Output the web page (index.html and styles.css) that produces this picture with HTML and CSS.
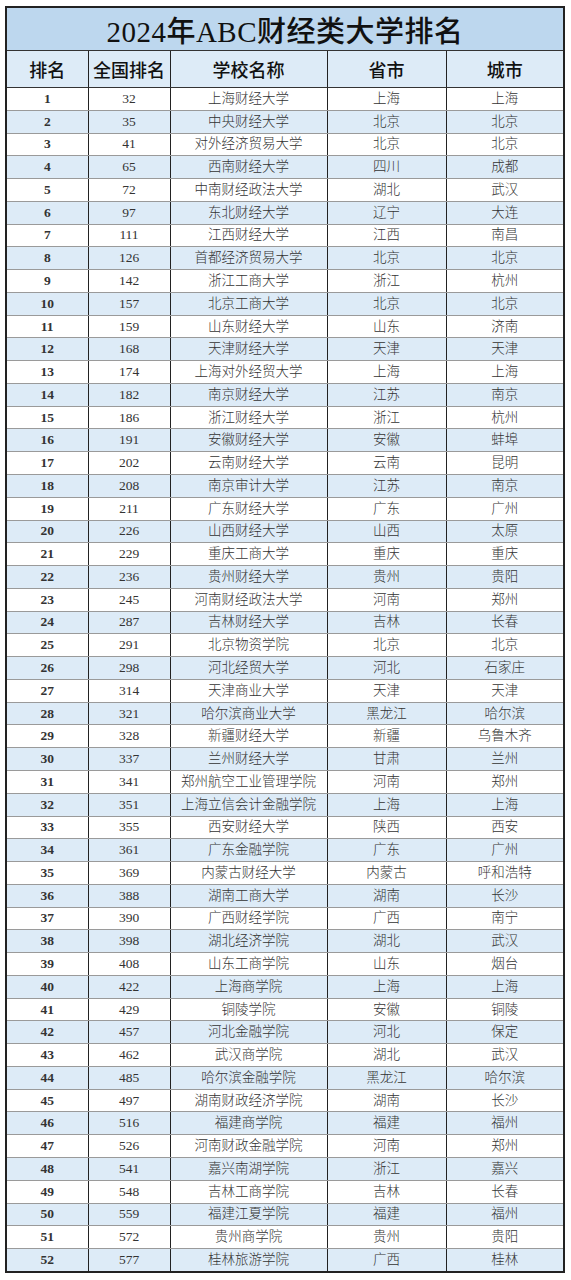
FILE: index.html
```html
<!DOCTYPE html>
<html lang="zh-CN">
<head>
<meta charset="utf-8">
<title>2024年ABC财经类大学排名</title>
<link rel="stylesheet" href="styles.css">
</head>
<body>
<table class="rank">
<colgroup>
<col class="c1"><col class="c2"><col class="c3"><col class="c4"><col class="c5">
</colgroup>
<thead>
<tr class="title"><th colspan="5">2024年ABC财经类大学排名</th></tr>
<tr class="head"><th>排名</th><th>全国排名</th><th>学校名称</th><th>省市</th><th>城市</th></tr>
</thead>
<tbody>
<tr><td>1</td><td>32</td><td>上海财经大学</td><td>上海</td><td>上海</td></tr>
<tr><td>2</td><td>35</td><td>中央财经大学</td><td>北京</td><td>北京</td></tr>
<tr><td>3</td><td>41</td><td>对外经济贸易大学</td><td>北京</td><td>北京</td></tr>
<tr><td>4</td><td>65</td><td>西南财经大学</td><td>四川</td><td>成都</td></tr>
<tr><td>5</td><td>72</td><td>中南财经政法大学</td><td>湖北</td><td>武汉</td></tr>
<tr><td>6</td><td>97</td><td>东北财经大学</td><td>辽宁</td><td>大连</td></tr>
<tr><td>7</td><td>111</td><td>江西财经大学</td><td>江西</td><td>南昌</td></tr>
<tr><td>8</td><td>126</td><td>首都经济贸易大学</td><td>北京</td><td>北京</td></tr>
<tr><td>9</td><td>142</td><td>浙江工商大学</td><td>浙江</td><td>杭州</td></tr>
<tr><td>10</td><td>157</td><td>北京工商大学</td><td>北京</td><td>北京</td></tr>
<tr><td>11</td><td>159</td><td>山东财经大学</td><td>山东</td><td>济南</td></tr>
<tr><td>12</td><td>168</td><td>天津财经大学</td><td>天津</td><td>天津</td></tr>
<tr><td>13</td><td>174</td><td>上海对外经贸大学</td><td>上海</td><td>上海</td></tr>
<tr><td>14</td><td>182</td><td>南京财经大学</td><td>江苏</td><td>南京</td></tr>
<tr><td>15</td><td>186</td><td>浙江财经大学</td><td>浙江</td><td>杭州</td></tr>
<tr><td>16</td><td>191</td><td>安徽财经大学</td><td>安徽</td><td>蚌埠</td></tr>
<tr><td>17</td><td>202</td><td>云南财经大学</td><td>云南</td><td>昆明</td></tr>
<tr><td>18</td><td>208</td><td>南京审计大学</td><td>江苏</td><td>南京</td></tr>
<tr><td>19</td><td>211</td><td>广东财经大学</td><td>广东</td><td>广州</td></tr>
<tr><td>20</td><td>226</td><td>山西财经大学</td><td>山西</td><td>太原</td></tr>
<tr><td>21</td><td>229</td><td>重庆工商大学</td><td>重庆</td><td>重庆</td></tr>
<tr><td>22</td><td>236</td><td>贵州财经大学</td><td>贵州</td><td>贵阳</td></tr>
<tr><td>23</td><td>245</td><td>河南财经政法大学</td><td>河南</td><td>郑州</td></tr>
<tr><td>24</td><td>287</td><td>吉林财经大学</td><td>吉林</td><td>长春</td></tr>
<tr><td>25</td><td>291</td><td>北京物资学院</td><td>北京</td><td>北京</td></tr>
<tr><td>26</td><td>298</td><td>河北经贸大学</td><td>河北</td><td>石家庄</td></tr>
<tr><td>27</td><td>314</td><td>天津商业大学</td><td>天津</td><td>天津</td></tr>
<tr><td>28</td><td>321</td><td>哈尔滨商业大学</td><td>黑龙江</td><td>哈尔滨</td></tr>
<tr><td>29</td><td>328</td><td>新疆财经大学</td><td>新疆</td><td>乌鲁木齐</td></tr>
<tr><td>30</td><td>337</td><td>兰州财经大学</td><td>甘肃</td><td>兰州</td></tr>
<tr><td>31</td><td>341</td><td>郑州航空工业管理学院</td><td>河南</td><td>郑州</td></tr>
<tr><td>32</td><td>351</td><td>上海立信会计金融学院</td><td>上海</td><td>上海</td></tr>
<tr><td>33</td><td>355</td><td>西安财经大学</td><td>陕西</td><td>西安</td></tr>
<tr><td>34</td><td>361</td><td>广东金融学院</td><td>广东</td><td>广州</td></tr>
<tr><td>35</td><td>369</td><td>内蒙古财经大学</td><td>内蒙古</td><td>呼和浩特</td></tr>
<tr><td>36</td><td>388</td><td>湖南工商大学</td><td>湖南</td><td>长沙</td></tr>
<tr><td>37</td><td>390</td><td>广西财经学院</td><td>广西</td><td>南宁</td></tr>
<tr><td>38</td><td>398</td><td>湖北经济学院</td><td>湖北</td><td>武汉</td></tr>
<tr><td>39</td><td>408</td><td>山东工商学院</td><td>山东</td><td>烟台</td></tr>
<tr><td>40</td><td>422</td><td>上海商学院</td><td>上海</td><td>上海</td></tr>
<tr><td>41</td><td>429</td><td>铜陵学院</td><td>安徽</td><td>铜陵</td></tr>
<tr><td>42</td><td>457</td><td>河北金融学院</td><td>河北</td><td>保定</td></tr>
<tr><td>43</td><td>462</td><td>武汉商学院</td><td>湖北</td><td>武汉</td></tr>
<tr><td>44</td><td>485</td><td>哈尔滨金融学院</td><td>黑龙江</td><td>哈尔滨</td></tr>
<tr><td>45</td><td>497</td><td>湖南财政经济学院</td><td>湖南</td><td>长沙</td></tr>
<tr><td>46</td><td>516</td><td>福建商学院</td><td>福建</td><td>福州</td></tr>
<tr><td>47</td><td>526</td><td>河南财政金融学院</td><td>河南</td><td>郑州</td></tr>
<tr><td>48</td><td>541</td><td>嘉兴南湖学院</td><td>浙江</td><td>嘉兴</td></tr>
<tr><td>49</td><td>548</td><td>吉林工商学院</td><td>吉林</td><td>长春</td></tr>
<tr><td>50</td><td>559</td><td>福建江夏学院</td><td>福建</td><td>福州</td></tr>
<tr><td>51</td><td>572</td><td>贵州商学院</td><td>贵州</td><td>贵阳</td></tr>
<tr><td>52</td><td>577</td><td>桂林旅游学院</td><td>广西</td><td>桂林</td></tr>
</tbody>
</table>
</body>
</html>
```

FILE: styles.css
```css
html, body {
  margin: 0;
  padding: 0;
  background: #ffffff;
}
body {
  padding: 6px 0 0 5px;
  font-family: "Liberation Serif", "Noto Sans CJK SC", serif;
  color: #222;
}
.rank {
  border-collapse: collapse;
  table-layout: fixed;
  width: 558px;
  border: 2px solid #222;
}
.c1 { width: 82px; }
.c2 { width: 82px; }
.c3 { width: 157px; }
.c4 { width: 119px; }
.c5 { width: 118px; }
.rank th, .rank td {
  padding: 0;
  text-align: center;
  white-space: nowrap;
  overflow: hidden;
}
.title th {
  height: 42px;
  background: #bdd7ee;
  font-size: 29px;
  font-weight: 500;
  color: #111;
  letter-spacing: 0.5px;
  border-bottom: 1px solid #333;
}
.head th {
  height: 36px;
  background: #ddebf7;
  font-size: 18px;
  font-weight: 500;
  color: #111;
  border-left: 1px solid #222;
  border-right: 1px solid #222;
  border-bottom: 1px solid #333;
}
.rank td {
  height: 21.78px;
  font-size: 13.5px;
  font-weight: 300;
  line-height: 16px;
  color: #333;
  border-left: 1px solid #222;
  border-right: 1px solid #222;
  border-bottom: 1px solid #9a9a9a;
}
.rank tbody tr:nth-child(even) td {
  background: #ddebf7;
}
.rank tbody tr:last-child td {
  border-bottom: 2px solid #222;
}
.rank td:first-child {
  font-weight: 600;
}
```
